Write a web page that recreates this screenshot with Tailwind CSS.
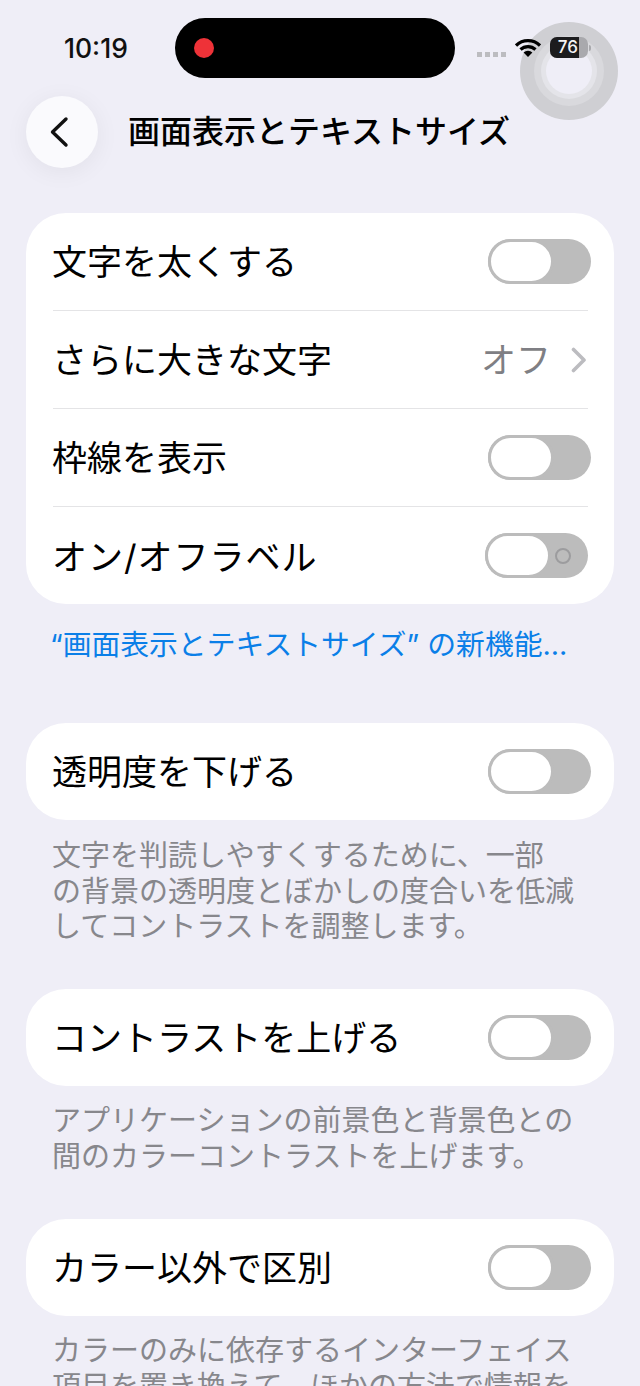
<!DOCTYPE html>
<html lang="ja">
<head>
  <meta charset="UTF-8" />
  <title>画面表示とテキストサイズ</title>
  <script src="https://cdn.jsdelivr.net/npm/@tailwindcss/browser@4"></script>
</head>
<body class="relative w-[640px] h-[1386px] overflow-hidden bg-[#efeef7] text-black font-['Inter','Noto_Sans_CJK_JP',sans-serif]">

  <!-- status bar -->
  <div class="flex items-center h-[96px] pl-[64px] pb-[1px]">
    <span class="w-[111px] pt-[3px] text-[26.5px] font-medium text-[#111]">10:19</span>
    <div class="flex items-center w-[280px] h-[60px] rounded-full bg-black pl-[19px]">
      <div class="w-[20px] h-[20px] rounded-full bg-[#ee3238]"></div>
    </div>
    <div class="flex gap-[3px] ml-[22px] mt-[13px]">
      <div class="w-[5px] h-[5px] bg-[#bcbcc0]"></div>
      <div class="w-[5px] h-[5px] bg-[#bcbcc0]"></div>
      <div class="w-[5px] h-[5px] bg-[#bcbcc0]"></div>
      <div class="w-[5px] h-[5px] bg-[#bcbcc0]"></div>
    </div>
  </div>

  <!-- assistive touch -->
  <div class="absolute left-[520px] top-[22px] flex items-center justify-center w-[98px] h-[98px] rounded-full bg-[#cfcfd3]">
    <div class="flex items-center justify-center w-[70px] h-[70px] rounded-full bg-[#d9d9dd]">
      <div class="flex items-center justify-center w-[56px] h-[56px] rounded-full bg-[#e4e4e9]">
        <div class="w-[46px] h-[46px] rounded-full bg-[#efeef7]"></div>
      </div>
    </div>
  </div>

  <!-- wifi + battery sit over the touch circle -->
  <svg class="absolute left-[515px] top-[38px]" width="26" height="20" viewBox="0 0 26 20">
    <path d="M1 7.5 A17 17 0 0 1 25 7.5" fill="none" stroke="#000" stroke-width="3.2"/>
    <path d="M5.5 11.5 A11 11 0 0 1 20.5 11.5" fill="none" stroke="#000" stroke-width="3.2"/>
    <path d="M13 19 L8.6 14.6 A6.4 6.4 0 0 1 17.4 14.6 Z" fill="#000"/>
  </svg>
  <div class="absolute left-[550px] top-[37px] flex items-center">
    <div class="flex w-[38px] h-[21px] rounded-[7px] overflow-hidden bg-[#a9a9ad]">
      <div class="flex items-center justify-end w-[29px] pr-[1px] bg-[#1c1c1e] text-[#f4f4f4] text-[17px] leading-none font-medium">76</div>
    </div>
    <div class="w-[2px] h-[6px] ml-[1px] rounded-r bg-[#a9a9ad]"></div>
  </div>

  <!-- nav -->
  <div class="flex items-center gap-[30px] pl-[26px] h-[72px]">
    <button class="flex items-center justify-center w-[72px] h-[72px] rounded-full bg-[#fafafd] shadow-[0_4px_24px_rgba(0,0,0,0.06)]">
      <svg width="24" height="32" viewBox="0 0 24 32"><path d="M16 3 L2.5 16 L16 29" fill="none" stroke="#111" stroke-width="3.4" stroke-linecap="round" stroke-linejoin="round"/></svg>
    </button>
    <h1 class="text-[32px] leading-[44px] font-medium whitespace-nowrap">画面表示とテキストサイズ</h1>
  </div>

  <main class="px-[26px] pt-[45px]">
    <section class="rounded-[40px] bg-white text-[35px]">
      <div class="flex items-center justify-between h-[97px] pl-[26px] pr-[23px]">
        <span class="pt-[1px]">文字を太くする</span>
        <div class="w-[103px] h-[45px] rounded-full bg-[#bcbcbc]">
          <div class="w-[66px] h-[45px] rounded-full bg-white border-[3px] border-[#bcbcbc]"></div>
        </div>
      </div>
      <div class="h-[1px] ml-[27px] mr-[26px] bg-[#e4e4e6]"></div>
      <div class="flex items-center justify-between h-[97px] pl-[26px] pr-[27px]">
        <span class="pt-[1px]">さらに大きな文字</span>
        <div class="flex items-center gap-[20px]">
          <span class="pt-[1px] text-[#7f7f84]">オフ</span>
          <svg width="16" height="26" viewBox="0 0 16 26"><path d="M2.5 2.5 L13 13 L2.5 23.5" fill="none" stroke="#bcbcc0" stroke-width="3.6" stroke-linecap="round" stroke-linejoin="round"/></svg>
        </div>
      </div>
      <div class="h-[1px] ml-[27px] mr-[26px] bg-[#e4e4e6]"></div>
      <div class="flex items-center justify-between h-[97px] pl-[26px] pr-[23px]">
        <span class="pt-[1px]">枠線を表示</span>
        <div class="w-[103px] h-[45px] rounded-full bg-[#bcbcbc]">
          <div class="w-[66px] h-[45px] rounded-full bg-white border-[3px] border-[#bcbcbc]"></div>
        </div>
      </div>
      <div class="h-[1px] ml-[27px] mr-[26px] bg-[#e4e4e6]"></div>
      <div class="flex items-center justify-between h-[97px] pl-[26px] pr-[26px]">
        <span class="pt-[3px] tracking-[1px]">オン/オフラベル</span>
        <div class="flex items-center justify-between w-[103px] h-[45px] pr-[17px] rounded-full bg-[#bcbcbc]">
          <div class="w-[66px] h-[45px] rounded-full bg-white border-[3px] border-[#bcbcbc]"></div>
          <div class="w-[16px] h-[16px] rounded-full border-[2px] border-[#9c9c9e]"></div>
        </div>
      </div>
    </section>
    <p class="mt-[21px] pl-[24px] text-[28.8px] leading-[40px] text-[#0a7fe8] whitespace-nowrap">“画面表示とテキストサイズ” の新機能...</p>

    <section class="flex items-center justify-between h-[97px] mt-[58px] pl-[26px] pr-[23px] rounded-[40px] bg-white text-[35px]">
      <span class="pt-[1px]">透明度を下げる</span>
      <div class="w-[103px] h-[45px] rounded-full bg-[#bcbcbc]">
        <div class="w-[66px] h-[45px] rounded-full bg-white border-[3px] border-[#bcbcbc]"></div>
      </div>
    </section>
    <p class="mt-[18px] pl-[26px] text-[29px] leading-[35.5px] text-[#87878c] whitespace-nowrap">文字を判読しやすくするために、一部<br>の背景の透明度とぼかしの度合いを低減<br>してコントラストを調整します。</p>

    <section class="flex items-center justify-between h-[97px] mt-[44.5px] pl-[26px] pr-[23px] rounded-[40px] bg-white text-[35px]">
      <span class="pt-[2px]">コントラストを上げる</span>
      <div class="w-[103px] h-[45px] rounded-full bg-[#bcbcbc]">
        <div class="w-[66px] h-[45px] rounded-full bg-white border-[3px] border-[#bcbcbc]"></div>
      </div>
    </section>
    <p class="mt-[17px] pl-[26px] text-[29px] leading-[35.7px] text-[#87878c] whitespace-nowrap">アプリケーションの前景色と背景色との<br>間のカラーコントラストを上げます。</p>

    <section class="flex items-center justify-between h-[97px] mt-[44.6px] pl-[26px] pr-[23px] rounded-[40px] bg-white text-[35px]">
      <span class="pt-[2px]">カラー以外で区別</span>
      <div class="w-[103px] h-[45px] rounded-full bg-[#bcbcbc]">
        <div class="w-[66px] h-[45px] rounded-full bg-white border-[3px] border-[#bcbcbc]"></div>
      </div>
    </section>
    <p class="mt-[17px] pl-[26px] text-[29px] leading-[35.7px] text-[#87878c] whitespace-nowrap">カラーのみに依存するインターフェイス<br>項目を置き換えて、ほかの方法で情報を</p>
  </main>
</body>
</html>
